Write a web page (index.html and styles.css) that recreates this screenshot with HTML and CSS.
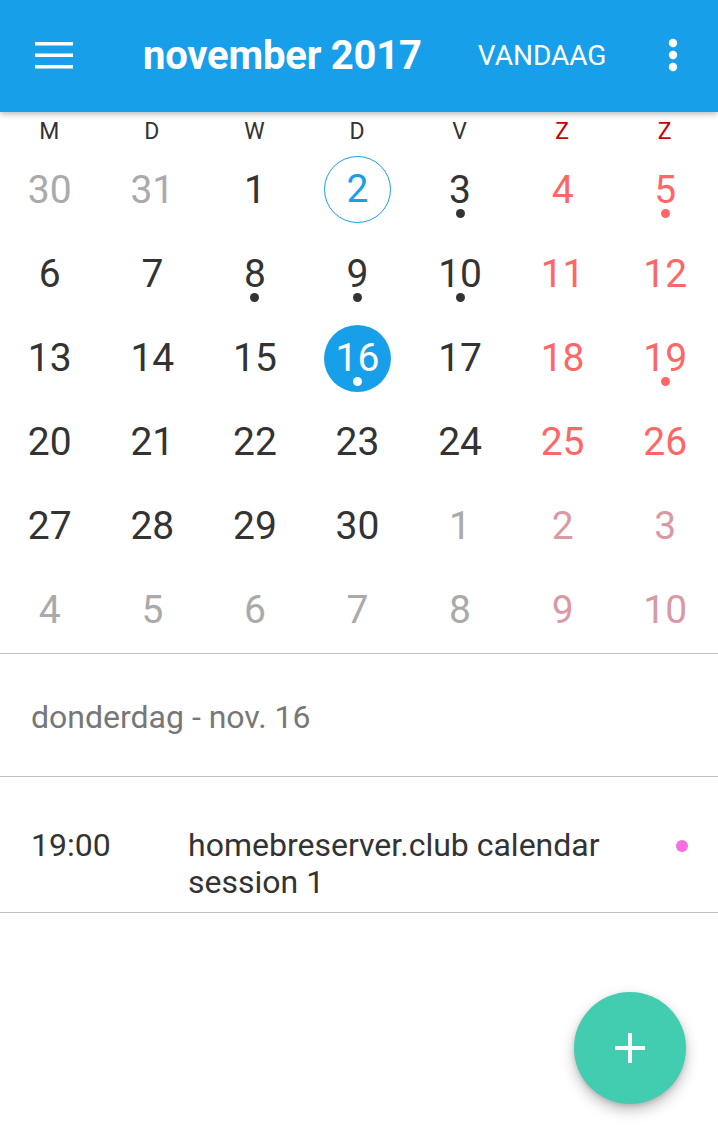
FILE: index.html
```html
<!DOCTYPE html>
<html>
<head>
<meta charset="utf-8">
<link rel="stylesheet" href="styles.css">
</head>
<body>
<div class="app">
  <header class="appbar">
    <div class="menu-btn">
      <svg width="38" height="28" viewBox="0 0 38 28"><rect x="0" y="1" width="38" height="3.5" fill="#fff"/><rect x="0" y="12.5" width="38" height="3.5" fill="#fff"/><rect x="0" y="24" width="38" height="3.5" fill="#fff"/></svg>
    </div>
    <div class="title">november 2017</div>
    <div class="today-btn">VANDAAG</div>
    <div class="more-btn">
      <svg width="10" height="34" viewBox="0 0 10 34"><circle cx="5" cy="5" r="4.2" fill="#fff"/><circle cx="5" cy="17" r="4.2" fill="#fff"/><circle cx="5" cy="29" r="4.2" fill="#fff"/></svg>
    </div>
  </header>

  <section class="calendar">
    <div class="weekdays">
      <div>M</div><div>D</div><div>W</div><div>D</div><div>V</div><div class="we">Z</div><div class="we">Z</div>
    </div>
    <div class="grid">
      <div class="cell"><span class="num other">30</span></div>
      <div class="cell"><span class="num other">31</span></div>
      <div class="cell"><span class="num">1</span></div>
      <div class="cell"><span class="num today">2</span></div>
      <div class="cell"><span class="num dot">3</span></div>
      <div class="cell"><span class="num weekend">4</span></div>
      <div class="cell"><span class="num weekend dot">5</span></div>

      <div class="cell"><span class="num">6</span></div>
      <div class="cell"><span class="num">7</span></div>
      <div class="cell"><span class="num dot">8</span></div>
      <div class="cell"><span class="num dot">9</span></div>
      <div class="cell"><span class="num dot">10</span></div>
      <div class="cell"><span class="num weekend">11</span></div>
      <div class="cell"><span class="num weekend">12</span></div>

      <div class="cell"><span class="num">13</span></div>
      <div class="cell"><span class="num">14</span></div>
      <div class="cell"><span class="num">15</span></div>
      <div class="cell"><span class="num selected dot">16</span></div>
      <div class="cell"><span class="num">17</span></div>
      <div class="cell"><span class="num weekend">18</span></div>
      <div class="cell"><span class="num weekend dot">19</span></div>

      <div class="cell"><span class="num">20</span></div>
      <div class="cell"><span class="num">21</span></div>
      <div class="cell"><span class="num">22</span></div>
      <div class="cell"><span class="num">23</span></div>
      <div class="cell"><span class="num">24</span></div>
      <div class="cell"><span class="num weekend">25</span></div>
      <div class="cell"><span class="num weekend">26</span></div>

      <div class="cell"><span class="num">27</span></div>
      <div class="cell"><span class="num">28</span></div>
      <div class="cell"><span class="num">29</span></div>
      <div class="cell"><span class="num">30</span></div>
      <div class="cell"><span class="num other">1</span></div>
      <div class="cell"><span class="num other-we">2</span></div>
      <div class="cell"><span class="num other-we">3</span></div>

      <div class="cell"><span class="num other">4</span></div>
      <div class="cell"><span class="num other">5</span></div>
      <div class="cell"><span class="num other">6</span></div>
      <div class="cell"><span class="num other">7</span></div>
      <div class="cell"><span class="num other">8</span></div>
      <div class="cell"><span class="num other-we">9</span></div>
      <div class="cell"><span class="num other-we">10</span></div>
    </div>
  </section>

  <section class="day-header">donderdag - nov. 16</section>

  <section class="events">
    <div class="event">
      <div class="time">19:00</div>
      <div class="ev-title">homebreserver.club calendar session 1</div>
      <div class="ev-dot"><span></span></div>
    </div>
  </section>

  <button class="fab">
    <svg width="30" height="30" viewBox="0 0 30 30"><rect x="0" y="13" width="30" height="4" fill="#fff"/><rect x="13" y="0" width="4" height="30" fill="#fff"/></svg>
  </button>
</div>
</body>
</html>
```

FILE: styles.css
```css
* { box-sizing: border-box; }
html, body {
  margin: 0;
  padding: 0;
  background: #fff;
  font-family: Roboto, "Noto Sans", "Liberation Sans", sans-serif;
}
.app {
  position: relative;
  width: 718px;
  height: 1136px;
  overflow: hidden;
  background: #fff;
}
.appbar {
  position: relative;
  z-index: 2;
  height: 112px;
  background: #189fe9;
  box-shadow: 0 2px 6px rgba(0,0,0,0.28);
  display: flex;
  align-items: center;
  color: #fff;
}
.menu-btn {
  width: 38px;
  margin-left: 35px;
  display: flex;
  align-items: center;
  margin-top: -2px;
}
.title {
  margin-left: 70px;
  font-size: 40px;
  font-weight: 700;
  letter-spacing: -0.2px;
  margin-top: -2px;
}
.today-btn {
  margin-left: 56px;
  font-size: 28px;
  font-weight: 400;
  margin-top: -2px;
}
.more-btn {
  margin-left: auto;
  margin-right: 40px;
  display: flex;
  margin-top: -3px;
}
.calendar {
  padding-bottom: 1px;
  border-bottom: 1px solid #bdbdbd;
}
.weekdays {
  display: grid;
  grid-template-columns: repeat(7, 1fr);
  height: 36px;
  align-items: center;
  text-align: center;
  font-size: 23px;
  color: #333;
  padding-top: 2px;
}
.weekdays > div { margin-left: -4px; }
.weekdays .we { color: #cc0000; }
.grid {
  display: grid;
  grid-template-columns: repeat(7, 1fr);
  grid-auto-rows: 84px;
}
.cell {
  display: flex;
  align-items: center;
  justify-content: center;
  margin-left: -3px;
}
.num {
  position: relative;
  width: 67px;
  height: 67px;
  border-radius: 50%;
  display: flex;
  align-items: center;
  justify-content: center;
  font-size: 39px;
  line-height: 1;
  color: #333;
  padding-top: 1px;
}
.num.other { color: #aaaaaa; }
.num.weekend { color: #ff6666; }
.num.other-we { color: #d99aa6; }
.num.today {
  border: 1.5px solid #189fe9;
  color: #189fe9;
  margin-top: -2px;
}
.num.selected {
  background: #189fe9;
  color: #fff;
}
.num.dot::after {
  content: "";
  position: absolute;
  left: 50%;
  top: 50%;
  width: 9px;
  height: 9px;
  margin-left: -4.5px;
  margin-top: 18.5px;
  border-radius: 50%;
  background: #333;
}
.num.weekend.dot::after { background: #ff6666; }
.num.selected.dot::after { background: #fff; }
.day-header {
  height: 123px;
  display: flex;
  align-items: center;
  padding-left: 31px;
  font-size: 32px;
  color: #777;
  border-bottom: 1px solid #bdbdbd;
  padding-top: 3px;
}
.events {
  border-bottom: 1px solid #bdbdbd;
}
.event {
  display: flex;
  align-items: flex-start;
  padding: 50px 0 11px 31px;
  font-size: 32px;
  line-height: 37px;
  color: #333;
}
.time {
  width: 157px;
  flex: none;
}
.ev-title {
  width: 470px;
  flex: none;
}
.ev-dot {
  flex: 1;
  display: flex;
  justify-content: center;
  padding-top: 13px;
  padding-right: 12px;
}
.ev-dot span {
  width: 12px;
  height: 12px;
  border-radius: 50%;
  background: #f76ee0;
}
.fab {
  position: absolute;
  left: 574px;
  top: 992px;
  width: 112px;
  height: 112px;
  border-radius: 50%;
  border: none;
  padding: 0;
  background: #43cdb0;
  display: flex;
  align-items: center;
  justify-content: center;
  box-shadow: 0 6px 14px rgba(0,0,0,0.25), 0 2px 4px rgba(0,0,0,0.12);
}
```
